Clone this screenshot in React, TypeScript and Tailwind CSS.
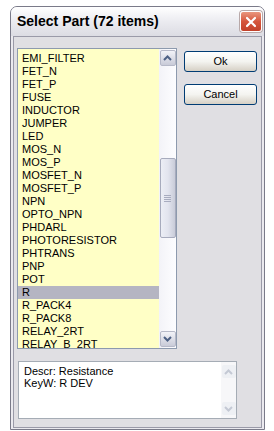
import React from "react";

const parts = [
  "EMI_FILTER", "FET_N", "FET_P", "FUSE", "INDUCTOR", "JUMPER", "LED", "MOS_N", "MOS_P",
  "MOSFET_N", "MOSFET_P", "NPN", "OPTO_NPN", "PHDARL", "PHOTORESISTOR", "PHTRANS", "PNP",
  "POT", "R", "R_PACK4", "R_PACK8", "RELAY_2RT", "RELAY_B_2RT",
];

const font = { fontFamily: '"Liberation Sans", Arial, sans-serif' };

const Arrow = ({ up, color = "#4d6185" }: { up?: boolean; color?: string }) => (
  <svg width="9" height="6" viewBox="0 0 9 6" className={up ? "" : "rotate-180"}>
    <path d="M1 5 L4.5 1.5 L8 5" fill="none" stroke={color} strokeWidth="2" />
  </svg>
);

const XpButton = ({ label }: { label: string }) => (
  <button className="w-[73px] h-[21px] rounded-[3px] border border-[#003c74] bg-gradient-to-b from-white via-[#f4f4f0] to-[#d6d0c5] text-[11px] text-black flex items-center justify-center">
    {label}
  </button>
);

export default function App() {
  return (
    <div className="w-[274px] h-[431px] bg-white pl-[10px] pt-[6px]" style={font}>
      <div className="w-[255px] h-[424px] rounded-t-[7px] border border-[#7a7a89] bg-[#ebeaef] flex flex-col overflow-hidden">
        {/* title bar */}
        <div className="h-[29px] shrink-0 bg-gradient-to-b from-[#ffffff] via-[#ebebf0] to-[#dcdce3] flex items-center justify-between pl-[6px] pr-[2px]">
          <span className="text-[14px] font-bold text-black">Select Part (72 items)</span>
          <div className="w-[22px] h-[21px] rounded-[3px] border border-white bg-gradient-to-b from-[#e9967d] via-[#d5553c] to-[#c2412a] flex items-center justify-center shadow-[0_0_0_1px_#b8a8a8]">
            <svg width="12" height="12" viewBox="0 0 12 12">
              <path d="M2 2 L10 10 M10 2 L2 10" stroke="white" strokeWidth="2.2" strokeLinecap="round" />
            </svg>
          </div>
        </div>
        {/* body with inner frame line */}
        <div className="flex-1 mx-[2px] mb-[1px] border border-[#9a9aa8] bg-[#e0dfe3] pl-[3px] pt-[11px] flex flex-col">
          <div className="flex">
            <div className="w-[160px] h-[301px] border border-[#8d9aae] bg-[#ffffc6] flex overflow-hidden">
              <div className="flex-1 pt-[3px] text-[11px] text-black leading-[13px]">
                {parts.map((p) => (
                  <div key={p} className={`h-[13px] pl-[4px] whitespace-nowrap ${p === "R" ? "bg-[#b5b5c2]" : ""}`}>
                    {p}
                  </div>
                ))}
              </div>
              <div className="w-[17px] h-full bg-gradient-to-r from-[#f3f3f8] to-[#fdfdff] flex flex-col pt-[1px] pb-[1px] items-center">
                <div className="w-[16px] h-[16px] rounded-[2px] border border-[#b6b9c8] bg-gradient-to-b from-[#f2f3f8] to-[#c9cbd8] flex items-center justify-center">
                  <Arrow up />
                </div>
                <div className="h-[92px]" />
                <div className="w-[16px] h-[80px] rounded-[2px] border border-[#a7abbd] bg-gradient-to-r from-[#eceef5] via-[#e2e4ee] to-[#c9ccd9] flex flex-col items-center justify-center gap-[1px]">
                  <div className="w-[7px] h-px bg-[#a8acbf]" />
                  <div className="w-[7px] h-px bg-[#a8acbf]" />
                  <div className="w-[7px] h-px bg-[#a8acbf]" />
                  <div className="w-[7px] h-px bg-[#a8acbf]" />
                </div>
                <div className="flex-1" />
                <div className="w-[16px] h-[16px] rounded-[2px] border border-[#b6b9c8] bg-gradient-to-b from-[#f2f3f8] to-[#c9cbd8] flex items-center justify-center">
                  <Arrow />
                </div>
              </div>
            </div>
            <div className="ml-[7px] pt-[3px] flex flex-col gap-[12px]">
              <XpButton label="Ok" />
              <XpButton label="Cancel" />
            </div>
          </div>
          <div className="mt-[12px] ml-[1px] w-[219px] h-[58px] border border-[#a5acb5] bg-white flex">
            <div className="flex-1 pl-[5px] pt-[3px] text-[11px] leading-[12px] text-black">
              <div>Descr: Resistance</div>
              <div>KeyW: R DEV</div>
            </div>
            <div className="w-[15px] h-full bg-[#f7f7f9] flex flex-col justify-between items-center py-[3px]">
              <div className="w-[14px] h-[13px] rounded-[2px] bg-[#eef0f4] flex items-center justify-center">
                <Arrow up color="#c4c9d4" />
              </div>
              <div className="w-[14px] h-[13px] rounded-[2px] bg-[#eef0f4] flex items-center justify-center">
                <Arrow color="#c4c9d4" />
              </div>
            </div>
          </div>
        </div>
      </div>
    </div>
  );
}
